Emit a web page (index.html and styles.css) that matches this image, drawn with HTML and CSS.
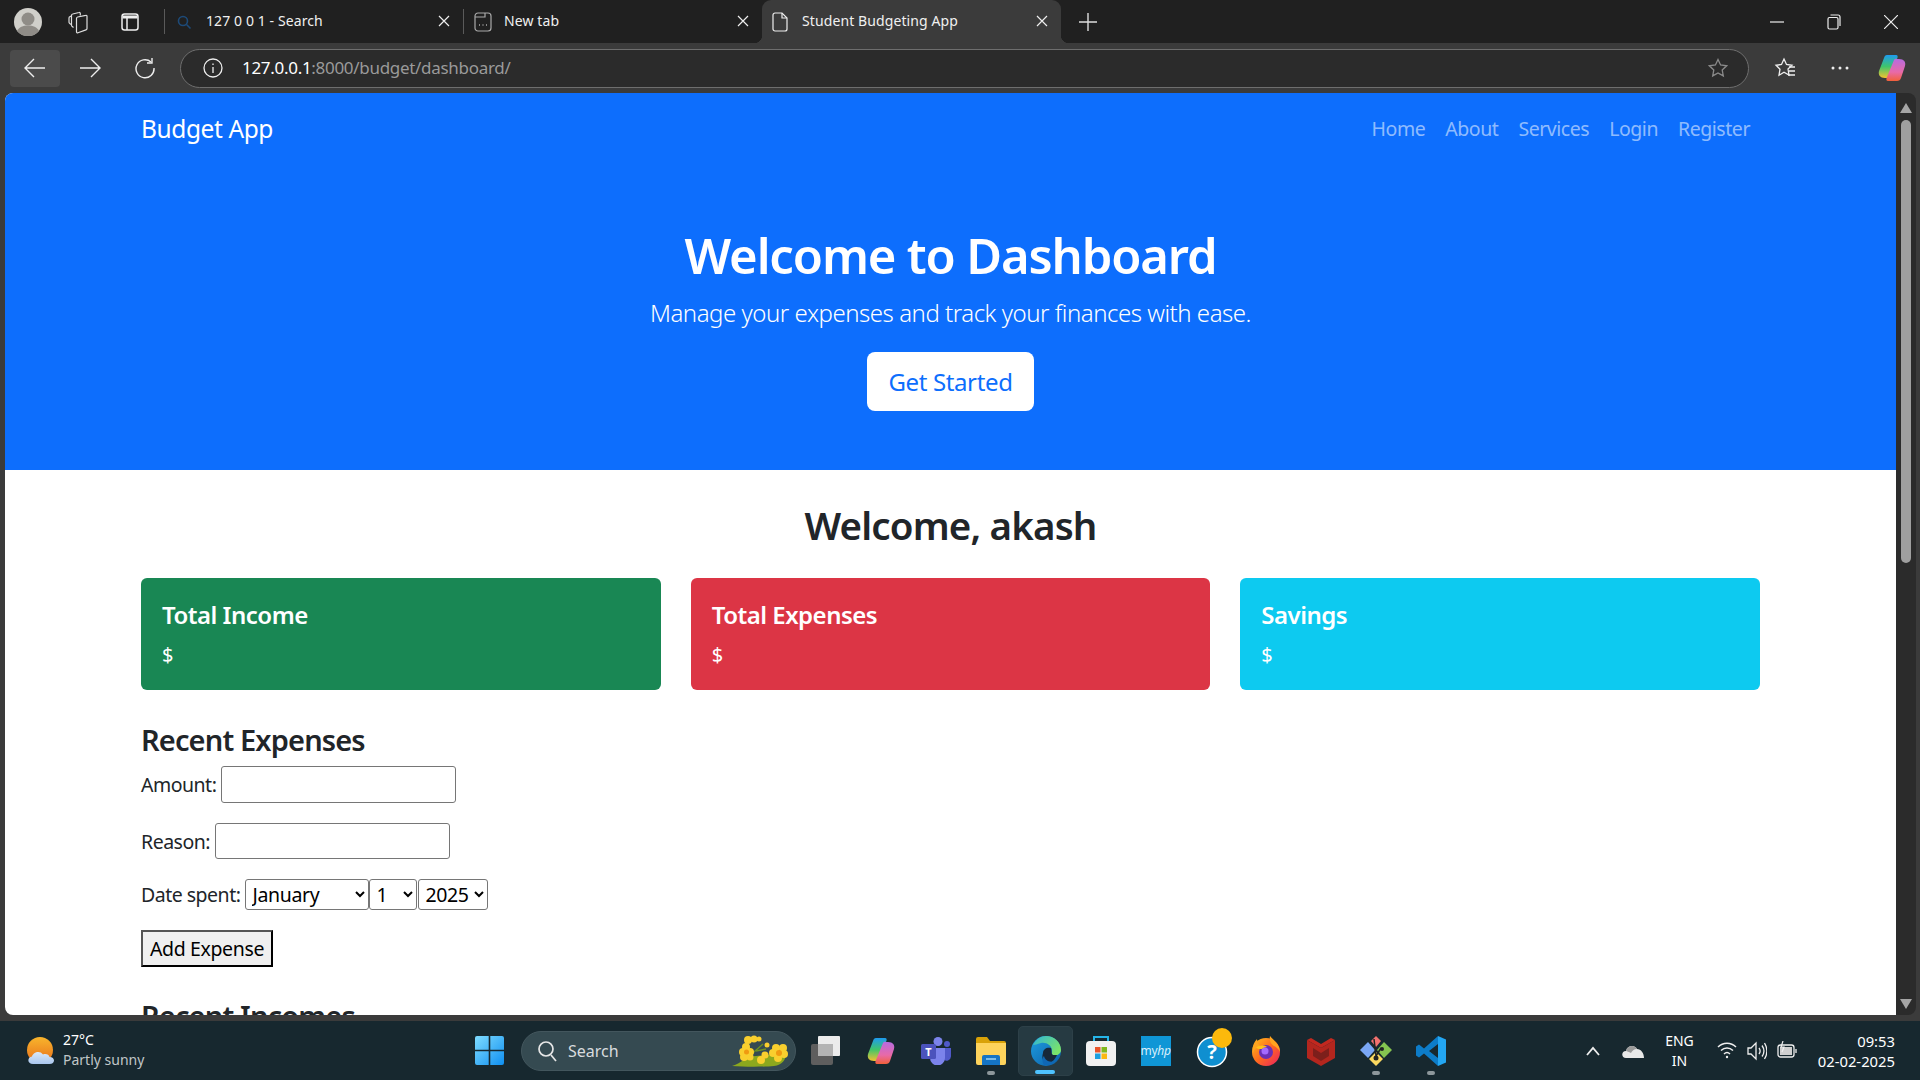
FILE: index.html
```html
<!DOCTYPE html>
<html lang="en">
<head>
    <meta charset="UTF-8">
    <meta name="viewport" content="width=device-width, initial-scale=1.0">
    <title>Student Budgeting App</title>
    <link rel="stylesheet" href="styles.css">
</head>
<body>
    <!-- browser tab strip -->
    <div class="tabstrip">
        <div class="strip-btn avatar-slot">
            <svg width="28" height="28" viewBox="0 0 28 28"><circle cx="14" cy="14" r="14" fill="#d0cfca"/><circle cx="14" cy="11" r="6.500" fill="#8f8c87"/><path d="M3 23c2-4 6-5.500 11-5.500S23 19 25 23a14 14 0 0 1-22 0z" fill="#8f8c87"/></svg>
        </div>
        <div class="strip-btn workspace-slot">
            <svg width="22" height="24" viewBox="0 0 22 24" fill="none" stroke="#ddd" stroke-width="1.200"><path d="M9.500 8.500a1.500 1.500 0 0 1 1.200-1.500l8-1.700a1 1 0 0 1 1.300 1v12.200a1.500 1.500 0 0 1-1 1.400l-8 2.800a1 1 0 0 1-1.500-1z"/><path d="M6.500 17.500L5 16.300a1.500 1.500 0 0 1-.5-1.100V5.500A1.500 1.500 0 0 1 5.700 4L12 2.500a1 1 0 0 1 1.300 1v2"/><path d="M3.800 14.500l-1.300-1.300a1.500 1.500 0 0 1-.5-1V8a1.500 1.500 0 0 1 1-1.400L4.500 6"/></svg>
        </div>
        <div class="strip-btn vtabs-slot">
            <svg width="20" height="20" viewBox="0 0 20 20" fill="none" stroke="#eee" stroke-width="1.500"><rect x="2" y="2" width="16" height="16" rx="2.500"/><path d="M2.500 5h15" stroke-width="3"/><path d="M7 6v12"/></svg>
        </div>
        <i class="tab-sep tab-sep-first"></i>
        <div class="tab tab-first">
            <svg class="tab-icon" width="16" height="16" viewBox="0 0 16 16" fill="none" stroke="#1d4a78" stroke-width="1.600"><circle cx="7" cy="7" r="4.500"/><path d="M10.500 10.500l4 4"/></svg>
            <span class="tab-title">127 0 0 1 - Search</span>
            <span class="tab-close"><svg width="12" height="12" viewBox="0 0 12 12" stroke="#eee" stroke-width="1.200"><path d="M1 1l10 10M11 1L1 11"/></svg></span>
        </div>
        <i class="tab-sep"></i>
        <div class="tab tab-second">
            <svg class="tab-icon" width="18" height="20" viewBox="0 0 18 20" fill="none" stroke="#aaa" stroke-width="1.200"><rect x="1" y="1" width="16" height="18" rx="3"/><path d="M1 5h10V1"/><path d="M5 13h1M8.500 13h1M12 13h1" stroke-width="1.600"/></svg>
            <span class="tab-title">New tab</span>
            <span class="tab-close"><svg width="12" height="12" viewBox="0 0 12 12" stroke="#eee" stroke-width="1.200"><path d="M1 1l10 10M11 1L1 11"/></svg></span>
        </div>
        <div class="tab tab-active">
            <svg class="tab-icon" width="16" height="20" viewBox="0 0 16 20" fill="none" stroke="#eee" stroke-width="1.200"><path d="M3 1h7l5 5v11a2 2 0 0 1-2 2H3a2 2 0 0 1-2-2V3a2 2 0 0 1 2-2z"/><path d="M10 1v5h5"/></svg>
            <span class="tab-title">Student Budgeting App</span>
            <span class="tab-close"><svg width="12" height="12" viewBox="0 0 12 12" stroke="#eee" stroke-width="1.200"><path d="M1 1l10 10M11 1L1 11"/></svg></span>
        </div>
        <div class="new-tab">
            <svg width="18" height="18" viewBox="0 0 18 18" stroke="#ddd" stroke-width="1.400"><path d="M9 0v18M0 9h18"/></svg>
        </div>
        <div class="window-btns">
            <svg width="14" height="14" viewBox="0 0 14 14" stroke="#eee" stroke-width="1.200"><path d="M0 7h14"/></svg>
            <svg width="14" height="16" viewBox="0 0 14 16" fill="none" stroke="#eee" stroke-width="1.200"><rect x="1" y="3.500" width="10" height="11.500" rx="1.500"/><path d="M3.500 1H11a2 2 0 0 1 2 2v9"/></svg>
            <svg width="14" height="14" viewBox="0 0 14 14" stroke="#eee" stroke-width="1.200"><path d="M0 0l14 14M14 0L0 14"/></svg>
        </div>
    </div>

    <!-- address bar row -->
    <div class="toolbar">
        <div class="tool-btn back-btn">
            <svg width="22" height="20" viewBox="0 0 22 20" fill="none" stroke="#eee" stroke-width="1.400"><path d="M21 10H1M10 1l-9 9 9 9"/></svg>
        </div>
        <div class="tool-btn">
            <svg width="22" height="20" viewBox="0 0 22 20" fill="none" stroke="#eee" stroke-width="1.400"><path d="M1 10h20M12 1l9 9-9 9"/></svg>
        </div>
        <div class="tool-btn">
            <svg width="22" height="22" viewBox="0 0 22 22" fill="none" stroke="#eee" stroke-width="1.400"><path d="M17 5a9 9 0 1 0 3 6"/><path d="M18 1v5h-5"/></svg>
        </div>
        <div class="address">
            <svg width="20" height="20" viewBox="0 0 20 20" fill="none" stroke="#eee" stroke-width="1.300"><circle cx="10" cy="10" r="9"/><path d="M10 9v6M10 5.500v1.500"/></svg>
            <span class="url"><span class="url-host">127.0.0.1</span>:8000/budget/dashboard/</span>
            <svg class="address-star" width="20" height="20" viewBox="0 0 20 20" fill="none" stroke="#8a8a8a" stroke-width="1.300"><path d="M10 1.500l2.600 5.500 6 .8-4.400 4.100 1.100 6L10 15l-5.300 2.900 1.100-6L1.400 7.800l6-.8z"/></svg>
        </div>
        <div class="tool-right">
            <svg width="22" height="22" viewBox="0 0 22 22" fill="none" stroke="#eee" stroke-width="1.300"><path d="M10 2l2.500 5.500 5.500.8-4 3.800 1 5.900-5-2.800-5 3 1-6-4-3.900 5.500-.8z"/><path d="M15 10h6M15 14h6M14 18h7"/></svg>
            <svg class="more-dots" width="22" height="6" viewBox="0 0 22 6" fill="#eee"><circle cx="4" cy="3" r="1.500"/><circle cx="11" cy="3" r="1.500"/><circle cx="18" cy="3" r="1.500"/></svg>
            <svg class="copilot-top" width="28" height="28" viewBox="0 0 28 28"><defs><linearGradient id="cop1" x1="0" y1="0" x2="0" y2="1"><stop offset="0" stop-color="#1e9bf0"/><stop offset=".5" stop-color="#3fc56b"/><stop offset="1" stop-color="#f2c230"/></linearGradient><linearGradient id="cop2" x1="0" y1="0" x2="0" y2="1"><stop offset="0" stop-color="#b66be0"/><stop offset=".6" stop-color="#e86aa8"/><stop offset="1" stop-color="#f2603a"/></linearGradient></defs><path d="M9 1h9c2 0 2 2 1 4l-7 17c-1 2-3 2-5 2-5 0-7-3-6-7L6 4c.5-2 1.500-3 3-3z" fill="url(#cop1)"/><path d="M19 27h-9c-2 0-2-2-1-4l7-17c1-2 3-1 5-1 5 0 7 3 6 7l-4 12c-.5 2-2 3-4 3z" fill="url(#cop2)"/></svg>
        </div>
    </div>

    <div class="window-body">
        <div class="viewport">
            <nav class="navbar">
                <a class="brand">Budget App</a>
                <ul class="nav-links">
                    <li>Home</li>
                    <li>About</li>
                    <li>Services</li>
                    <li>Login</li>
                    <li>Register</li>
                </ul>
            </nav>
            <header class="hero">
                <h1>Welcome to Dashboard</h1>
                <p class="lead">Manage your expenses and track your finances with ease.</p>
                <a class="hero-btn">Get Started</a>
            </header>
            <main class="container">
                <h2>Welcome, akash</h2>
                <div class="cards">
                    <div class="card card-green">
                        <h5>Total Income</h5>
                        <p>$</p>
                    </div>
                    <div class="card card-red">
                        <h5>Total Expenses</h5>
                        <p>$</p>
                    </div>
                    <div class="card card-cyan">
                        <h5>Savings</h5>
                        <p>$</p>
                    </div>
                </div>
                <h3>Recent Expenses</h3>
                <form>
                    <p class="row-amount"><label>Amount:</label> <input type="number" class="text-field"></p>
                    <p class="row-reason"><label>Reason:</label> <input type="text" class="text-field"></p>
                    <p class="row-date">
                        <label>Date spent:</label>
                        <select class="sel-month"><option>January</option></select><select class="sel-day"><option>1</option></select><select class="sel-year"><option>2025</option></select>
                    </p>
                    <button type="button" class="add-btn">Add Expense</button>
                </form>
                <h3 class="incomes">Recent Incomes</h3>
            </main>
        </div>
        <div class="scrollbar">
            <svg width="14" height="12" viewBox="0 0 14 12" fill="#a5a5a5"><path d="M7 1l6 10H1z"/></svg>
            <div class="scroll-track"><div class="scroll-thumb"></div></div>
            <svg width="14" height="12" viewBox="0 0 14 12" fill="#a5a5a5"><path d="M7 11L1 1h12z"/></svg>
        </div>
    </div>

    <!-- windows taskbar -->
    <footer class="taskbar">
        <div class="weather">
            <svg width="28" height="28" viewBox="0 0 28 28"><defs><linearGradient id="sun" x1="0" y1="0" x2="0" y2="1"><stop offset="0" stop-color="#f8b52c"/><stop offset="1" stop-color="#e8701c"/></linearGradient><linearGradient id="cloud" x1="0" y1="0" x2="0" y2="1"><stop offset="0" stop-color="#dbe8f8"/><stop offset="1" stop-color="#a9c6ee"/></linearGradient></defs><circle cx="13" cy="13" r="13" fill="url(#sun)"/><path d="M6 27c-6 0-6-7-1-7.500C6 15 13 13 16 17.500c3-1 6 0 6.500 2.500 6 0 6 7 0 7z" fill="url(#cloud)"/></svg>
            <div class="weather-text">
                <span>27°C</span>
                <span class="weather-sub">Partly sunny</span>
            </div>
        </div>
        <div class="task-center">
            <svg class="start" width="29" height="29" viewBox="0 0 29 29"><defs><linearGradient id="win" x1="0" y1="0" x2="1" y2="1"><stop offset="0" stop-color="#7fdcff"/><stop offset="1" stop-color="#0f8ff0"/></linearGradient></defs><path d="M0 2a2 2 0 0 1 2-2h11.700v13.700H0zM15.300 0H27a2 2 0 0 1 2 2v11.700H15.300zM0 15.300h13.700V29H2a2 2 0 0 1-2-2zM15.300 15.300H29V27a2 2 0 0 1-2 2H15.300z" fill="url(#win)"/></svg>
            <div class="search-pill">
                <svg width="20" height="22" viewBox="0 0 20 22" fill="none" stroke="#e6e6e6" stroke-width="1.700"><circle cx="9" cy="9" r="7"/><path d="M14 15l5 6"/></svg>
                <span>Search</span>
                <svg class="flowers" width="60" height="32" viewBox="0 0 60 32"><path d="M0 31c10-3 14-10 24-10l30-3c0 7-4 12-12 13-10 1-30 1-42 0z" fill="#8ca81e"/><path d="M14 24L31 9M24 16l10-2" stroke="#6c9022" stroke-width="1.500" fill="none"/><g fill="#f9cf2e"><circle cx="11" cy="17" r="4"/><circle cx="18" cy="17" r="4"/><circle cx="14" cy="12" r="4"/><circle cx="12" cy="22" r="4"/><circle cx="18" cy="22" r="3.500"/><circle cx="44" cy="13" r="4"/><circle cx="51" cy="13" r="4"/><circle cx="41" cy="18" r="4"/><circle cx="52" cy="19" r="4"/><circle cx="46" cy="23" r="4"/><circle cx="29" cy="25" r="4"/><circle cx="33" cy="20" r="3.500"/><circle cx="16" cy="5" r="4"/><circle cx="22" cy="4" r="3.500"/><circle cx="27" cy="4" r="2.500"/><circle cx="35" cy="10" r="2.500"/></g><g fill="#f09a10"><circle cx="14.500" cy="17" r="2.500"/><circle cx="47" cy="18" r="3"/></g></svg>
            </div>
            <div class="task-icons">
                <div class="task-icon">
                    <svg width="30" height="30" viewBox="0 0 30 30"><rect x="0" y="8" width="22" height="21" rx="2" fill="#5e5e5e"/><rect x="7" y="0" width="22" height="20" rx="1" fill="#ececec"/><rect x="7" y="8" width="15" height="12" fill="#b4b4b4"/></svg>
                </div>
                <div class="task-icon">
                    <svg width="28" height="28" viewBox="0 0 28 28"><path d="M9 1h9c2 0 2 2 1 4l-7 17c-1 2-3 2-5 2-5 0-7-3-6-7L6 4c.5-2 1.500-3 3-3z" fill="url(#cop1)"/><path d="M19 27h-9c-2 0-2-2-1-4l7-17c1-2 3-1 5-1 5 0 7 3 6 7l-4 12c-.5 2-2 3-4 3z" fill="url(#cop2)"/></svg>
                </div>
                <div class="task-icon">
                    <svg width="30" height="28" viewBox="0 0 30 28"><circle cx="17" cy="4.500" r="4.500" fill="#7b83eb"/><circle cx="26" cy="7" r="3" fill="#5059c9"/><path d="M21 11h9v8a4.500 4.500 0 0 1-8 3z" fill="#5059c9"/><path d="M9 11h15v10a7.500 7.500 0 0 1-15 0z" fill="#7b83eb"/><rect x="0" y="7" width="15" height="15" rx="1.500" fill="#4b53bc"/><text x="7.500" y="19" class="teams-t">T</text></svg>
                </div>
                <div class="task-icon has-dot">
                    <svg width="30" height="28" viewBox="0 0 30 28"><path d="M0 2a2 2 0 0 1 2-2h9l3 4h14a2 2 0 0 1 2 2v4H0z" fill="#d9a208"/><path d="M0 6h30v20a2 2 0 0 1-2 2H2a2 2 0 0 1-2-2z" fill="#fdd35c"/><path d="M6 20a2 2 0 0 1 2-2h14a2 2 0 0 1 2 2v8H6z" fill="#1574c4"/><path d="M10 22h10" stroke="#9fd4f5" stroke-width="1.500"/></svg>
                </div>
                <div class="task-icon task-current">
                    <svg width="30" height="30" viewBox="0 0 30 30"><defs><linearGradient id="edge" x1="0" y1="0" x2="1" y2="1"><stop offset="0" stop-color="#1f9ee0"/><stop offset="1" stop-color="#0b5ea8"/></linearGradient><linearGradient id="edge2" x1="0" y1="0" x2="1" y2=".6"><stop offset="0" stop-color="#2fb5d8"/><stop offset="1" stop-color="#7ae36a"/></linearGradient></defs><circle cx="15" cy="15" r="15" fill="url(#edge)"/><path d="M2 9C5 3 10 0 15 0c8 0 15 6 15 14 0 4-4 6-8 5-2-1-1-2-1-4C21 9 15 6 10 7 6 8 4 9 2 9z" fill="url(#edge2)"/><path d="M12 17c0-4 4-6 8-5 1 3 0 6 2 7l4 0c-3 7-8 9-12 8-3-3-3-7-2-10z" fill="#17283a"/><path d="M13 20c1 4 5 7 11 5-3 4-8 5-11 4-2-3-2-7 0-9z" fill="#0f67b4"/></svg>
                    <i class="current-bar"></i>
                </div>
                <div class="task-icon">
                    <svg width="30" height="30" viewBox="0 0 30 30"><path d="M8 6V1h14v5" fill="none" stroke="#25b5e8" stroke-width="2"/><rect x="0" y="5" width="30" height="25" rx="4" fill="#f1f1f1"/><rect x="9" y="11" width="5.500" height="5.500" fill="#e8542a"/><rect x="15.500" y="11" width="5.500" height="5.500" fill="#7fb81e"/><rect x="9" y="17.500" width="5.500" height="5.500" fill="#1a9fe0"/><rect x="15.500" y="17.500" width="5.500" height="5.500" fill="#fbb812"/></svg>
                </div>
                <div class="task-icon">
                    <div class="myhp">my<em>hp</em></div>
                </div>
                <div class="task-icon">
                    <svg class="help-icon" width="38" height="40" viewBox="0 0 38 40"><circle cx="16" cy="24" r="14.500" fill="#0f8fd0" stroke="#fff" stroke-width="1.500"/><text x="16" y="31" class="help-q">?</text><circle cx="26" cy="10" r="10" fill="#fcb90c"/></svg>
                </div>
                <div class="task-icon">
                    <svg width="28" height="30" viewBox="0 0 28 30"><defs><linearGradient id="fox" x1="0" y1="0" x2="1" y2="1"><stop offset="0" stop-color="#ffc21a"/><stop offset=".5" stop-color="#ff6a1f"/><stop offset="1" stop-color="#e91e63"/></linearGradient></defs><circle cx="14" cy="16" r="14" fill="url(#fox)"/><path d="M18 0c3 4 10 8 10 16-2-4-4-5-6-6-3-2-5-5-4-10zM5 3c0 3 1 5 3 7-3 1-6 3-7 7-1-5 0-10 4-14z" fill="#ffa51f"/><circle cx="14" cy="16" r="7" fill="#6a2fb5"/><circle cx="13" cy="15" r="3.500" fill="#a46bff"/><path d="M4 12c3-3 8-3 11-1-3 0-4 1-5 2-2 0-4 0-6-1z" fill="#ffc21a"/></svg>
                </div>
                <div class="task-icon">
                    <svg width="28" height="30" viewBox="0 0 28 30"><path d="M0 4l14 8 14-8 0 0v18L14 30 0 22z" fill="#b3261e"/><path d="M0 4l4-2 10 6 10-6 4 2-14 8z" fill="#c2281f"/><path d="M6 12l8 5 8-5v8l-8 5-8-5z" fill="#7d1f1b"/></svg>
                </div>
                <div class="task-icon has-dot">
                    <svg width="32" height="30" viewBox="0 0 32 30"><path d="M16 0l5 5-5 6-5-6z" fill="#f2716f"/><path d="M8 6l7 8-7 8-8-8z" fill="#7aa7f5"/><path d="M24 6l8 8-8 8-7-8z" fill="#85c450"/><path d="M16 16l7 7-7 7-7-7z" fill="#fbd860"/><path d="M14 3l2 17M21 12l-5 8" stroke="#222" stroke-width="1.500" fill="none"/><circle cx="22" cy="13" r="2" fill="#222"/><circle cx="16" cy="22" r="2.500" fill="#222"/></svg>
                </div>
                <div class="task-icon has-dot">
                    <svg width="30" height="30" viewBox="0 0 30 30"><path d="M22 0l-14 12.500-5-4-3 2v9l3 2 5-4L22 30l0-8-9-7 9-7z" fill="#0d7cc8"/><path d="M22 0l8 3.500v23L22 30z" fill="#23a6f2"/></svg>
                </div>
            </div>
        </div>
        <div class="tray">
            <svg class="tray-caret" width="16" height="10" viewBox="0 0 16 10" fill="none" stroke="#eee" stroke-width="1.800"><path d="M2 9l6-7 6 7"/></svg>
            <svg class="tray-cloud" width="22" height="14" viewBox="0 0 22 14"><path d="M4 14c-5 0-5-7 0-7 1-5 8-7 11-2 4 0 7 4 7 9z" fill="#e8e8e8"/><path d="M4 7c1-5 8-7 11-2-3 0-5 2-6 4-2-1-4-2-5-2z" fill="#9a9a9a"/></svg>
            <div class="lang"><span>ENG</span><span>IN</span></div>
            <div class="tray-sys">
                <svg width="20" height="18" viewBox="0 0 20 18" fill="none" stroke="#eee" stroke-width="1.500"><path d="M1 6c5-5 13-5 18 0M4 9.500c3.500-3.500 8.500-3.500 12 0M7 13c2-2 4-2 6 0"/><circle cx="10" cy="16" r="1.200" fill="#eee" stroke="none"/></svg>
                <svg width="20" height="20" viewBox="0 0 20 20" fill="none" stroke="#eee" stroke-width="1.300"><path d="M1 7v6h3l5 5V2L4 7z"/><path d="M12 7c1.500 2 1.500 4 0 6M15 4.500c2.500 3.500 2.500 7.500 0 11M17.500 2c3 5 3 11 0 16"/></svg>
                <svg width="20" height="18" viewBox="0 0 20 18" fill="none" stroke="#eee" stroke-width="1.300"><rect x="1" y="4" width="16" height="12" rx="2.500"/><rect x="3" y="6" width="12" height="8" fill="#cfcfcf" stroke="none"/><path d="M19 8v4"/><path d="M6 0L4 6h3L5 11" stroke-width="1.200"/></svg>
            </div>
            <div class="clock"><span>09:53</span><span>02-02-2025</span></div>
        </div>
    </footer>
</body>
</html>
```

FILE: styles.css
```css
* {
    box-sizing: border-box;
}

body {
    margin: 0;
    height: 1080px;
    width: 1920px;
    overflow: hidden;
    display: flex;
    flex-direction: column;
    background-color: #3b3b3b;
    font-family: "Noto Sans", sans-serif;
    color: #212529;
}

/* tab strip */
.tabstrip {
    height: 43px;
    flex: none;
    display: flex;
    align-items: center;
    background-color: #202020;
    color: #f0f0f0;
    font-size: 14px;
    letter-spacing: 0.1px;
}

.strip-btn {
    display: flex;
    justify-content: center;
    flex: none;
}

.avatar-slot {
    width: 54px;
    padding-left: 2px;
}

.workspace-slot {
    width: 48px;
}

.vtabs-slot {
    width: 56px;
}

.tab-sep {
    width: 1px;
    height: 25px;
    flex: none;
    background-color: #5a5a5a;
}

.tab-sep-first {
    margin-left: 6px;
}

.tab {
    width: 298px;
    height: 43px;
    display: flex;
    align-items: center;
    flex: none;
    padding: 0 13px 0 10px;
}

.tab-first {
    padding-left: 11px;
}

.tab-second {
    padding-left: 10px;
}

.tab-active {
    width: 299px;
    position: relative;
    background-color: #3b3b3b;
    border-radius: 9px 9px 0 0;
}

.tab-active::before,
.tab-active::after {
    content: "";
    position: absolute;
    bottom: 0;
    width: 8px;
    height: 8px;
}

.tab-active::before {
    left: -8px;
    background: radial-gradient(circle at 0 0, transparent 8px, #3b3b3b 8.500px);
}

.tab-active::after {
    right: -8px;
    background: radial-gradient(circle at 100% 0, transparent 8px, #3b3b3b 8.500px);
}

.tab-title {
    flex: 1;
    margin-left: 12px;
    padding-bottom: 2px;
    white-space: nowrap;
}

.tab-first .tab-title,
.tab-active .tab-title {
    margin-left: 14px;
}

.new-tab {
    margin-left: 18px;
    display: flex;
}

.window-btns {
    margin-left: auto;
    display: flex;
    align-items: center;
    gap: 43px;
    padding-right: 22px;
}

/* address bar */
.toolbar {
    height: 50px;
    flex: none;
    display: flex;
    align-items: center;
    background-color: #3b3b3b;
    padding-left: 10px;
}

.tool-btn {
    width: 50px;
    height: 37px;
    margin-right: 5px;
    border-radius: 4px;
    display: flex;
    align-items: center;
    justify-content: center;
}

.back-btn {
    background-color: #4b4b4b;
}

.address {
    width: 1569px;
    height: 39px;
    margin-left: 5px;
    display: flex;
    align-items: center;
    padding: 0 20px 0 22px;
    background-color: #2b2b2b;
    border: 1px solid #6e6e6e;
    border-radius: 20px;
    font-size: 17px;
    letter-spacing: -0.3px;
    color: #9a9a9a;
}

.url {
    margin-left: 19px;
    padding-bottom: 2px;
}

.url-host {
    color: #fff;
}

.address-star {
    margin-left: auto;
}

.tool-right {
    display: flex;
    align-items: center;
    padding-left: 25px;
}

.more-dots {
    margin-left: 33px;
}

.copilot-top {
    margin-left: 27px;
}

/* page area */
.window-body {
    height: 928px;
    flex: none;
    display: flex;
    padding: 0 0 6px 5px;
}

.viewport {
    flex: 1;
    background-color: #fff;
    overflow: hidden;
    border-radius: 8px 0 0 8px;
}

.scrollbar {
    width: 20px;
    margin-right: 4px;
    background-color: #2b2b2b;
    border-radius: 0 8px 8px 0;
    display: flex;
    flex-direction: column;
    align-items: center;
    padding: 9px 0 5px;
}

.scroll-track {
    flex: 1;
    width: 100%;
    padding: 6px 5px;
}

.scroll-thumb {
    height: 443px;
    width: 10px;
    background-color: #9f9f9f;
    border-radius: 5px;
}

.navbar {
    height: 70px;
    background-color: #0d6efd;
    display: flex;
    align-items: center;
    justify-content: space-between;
    padding: 0 146px 0 136px;
}

.brand {
    color: #fff;
    font-size: 24.500px;
    letter-spacing: -0.4px;
}

.nav-links {
    list-style: none;
    display: flex;
    gap: 20px;
    margin: 0;
    padding: 0;
    color: rgba(255, 255, 255, 0.55);
    font-size: 19.500px;
    letter-spacing: -0.45px;
}

.hero {
    height: 307px;
    background-color: #0d6efd;
    color: #fff;
    text-align: center;
    padding-top: 62px;
}

.hero h1 {
    margin: 0;
    font-size: 49px;
    line-height: 60px;
    font-weight: 600;
    letter-spacing: -1.15px;
}

.lead {
    margin: 9px 0 20px;
    font-size: 24px;
    line-height: 38px;
    font-weight: 300;
    letter-spacing: -0.47px;
}

.hero-btn {
    display: inline-block;
    height: 59px;
    padding: 0 21.500px;
    line-height: 59px;
    background-color: #fff;
    color: #0d6efd;
    border-radius: 8px;
    font-size: 24px;
    letter-spacing: -0.36px;
}

.container {
    padding: 31px 136px 0;
}

.container h2 {
    margin: 0 0 29px;
    font-size: 38.500px;
    line-height: 48px;
    font-weight: 600;
    letter-spacing: -0.85px;
    text-align: center;
}

.cards {
    display: grid;
    grid-template-columns: repeat(3, 1fr);
    gap: 30px;
}

.card {
    height: 112px;
    padding: 22px 21px;
    color: #fff;
    border-radius: 6px;
}

.card h5 {
    margin: 0 0 10px;
    font-size: 24px;
    line-height: 30px;
    font-weight: 600;
    letter-spacing: -0.5px;
}

.card p {
    margin: 0;
    font-size: 20px;
    line-height: 30px;
}

.card-green {
    background-color: #198754;
}

.card-red {
    background-color: #dc3545;
}

.card-cyan {
    background-color: #0dcaf0;
}

.container h3 {
    margin: 32px 0 8px;
    font-size: 29px;
    line-height: 36px;
    font-weight: 600;
    letter-spacing: -0.85px;
}

.container .incomes {
    margin-top: 31px;
}

form p {
    margin: 0;
    font-size: 19.500px;
    letter-spacing: -0.5px;
    display: flex;
    align-items: center;
    gap: 5px;
}

.row-amount {
    height: 37px;
}

.row-reason {
    height: 36px;
    margin-top: 20px;
}

.row-date {
    height: 31px;
    margin-top: 20px;
}

.text-field {
    width: 235px;
    height: 100%;
    padding: 1px 2px;
    border: 1px solid #767676;
    border-radius: 3px;
    background-color: #fff;
}

form select {
    height: 31px;
    padding-left: 2px;
    font-family: inherit;
    font-size: 19.500px;
    letter-spacing: -0.35px;
    color: #000;
    background-color: #fff;
    border: 1px solid #767676;
    border-radius: 3px;
}

.sel-month {
    width: 124px;
}

.sel-day {
    width: 48px;
    margin-left: -5px;
}

.sel-year {
    width: 70px;
    margin-left: -4px;
}

.add-btn {
    display: block;
    width: 132px;
    height: 37px;
    margin-top: 20px;
    padding: 0;
    font-family: inherit;
    font-size: 19.500px;
    letter-spacing: -0.35px;
    color: #000;
    background-color: #efefef;
    border: 2px outset #000;
}

/* taskbar */
.taskbar {
    height: 59px;
    flex: none;
    display: flex;
    align-items: center;
    background-color: #17282f;
    color: #fff;
}

.weather {
    width: 475px;
    display: flex;
    align-items: center;
    gap: 8px;
    padding-left: 27px;
}

.weather-text {
    display: flex;
    flex-direction: column;
    padding-bottom: 2px;
    font-size: 14px;
    line-height: 20px;
}

.weather-sub {
    color: #c0c6c8;
}

.task-center {
    display: flex;
    align-items: center;
}

.start {
    margin-right: 17px;
}

.search-pill {
    width: 275px;
    height: 40px;
    display: flex;
    align-items: center;
    gap: 11px;
    padding-left: 15px;
    background-color: #354a51;
    border: 1px solid #43565d;
    border-radius: 20px;
    font-size: 16px;
    color: #d8dcde;
    overflow: hidden;
}

.flowers {
    margin-left: auto;
    margin-right: 3px;
}

.task-icons {
    display: flex;
    margin-left: 2px;
}

.task-icon {
    width: 55px;
    height: 50px;
    display: flex;
    align-items: center;
    justify-content: center;
    position: relative;
    border-radius: 5px;
}

.task-current {
    background-color: #263a42;
    border: 1px solid #2d4048;
}

.has-dot::after {
    content: "";
    position: absolute;
    bottom: 1px;
    left: 24px;
    width: 8px;
    height: 4px;
    border-radius: 2px;
    background-color: #8d979b;
}

.current-bar {
    position: absolute;
    bottom: 1px;
    left: 16px;
    width: 20px;
    height: 4px;
    border-radius: 2px;
    background-color: #4fc3ff;
}

.help-icon {
    margin: -6px 0 0 8px;
}

.teams-t {
    font-size: 11px;
    font-weight: 700;
    fill: #fff;
    text-anchor: middle;
}

.help-q {
    font-size: 20px;
    font-weight: 700;
    fill: #fff;
    text-anchor: middle;
}

.myhp {
    width: 30px;
    height: 30px;
    background-color: #0f96d6;
    color: #d8f0fb;
    font-size: 12px;
    letter-spacing: -0.3px;
    line-height: 30px;
    text-align: center;
}

.tray {
    margin-left: auto;
    display: flex;
    align-items: center;
    padding-right: 25px;
    font-size: 14px;
}

.tray-caret {
    margin-right: 21px;
}

.tray-cloud {
    margin-right: 21px;
}

.lang {
    display: flex;
    flex-direction: column;
    align-items: center;
    line-height: 20px;
    margin-right: 23px;
}

.tray-sys {
    display: flex;
    gap: 10px;
    margin-right: 21px;
}

.clock {
    display: flex;
    flex-direction: column;
    align-items: flex-end;
    font-size: 14.800px;
    line-height: 20px;
}
```
